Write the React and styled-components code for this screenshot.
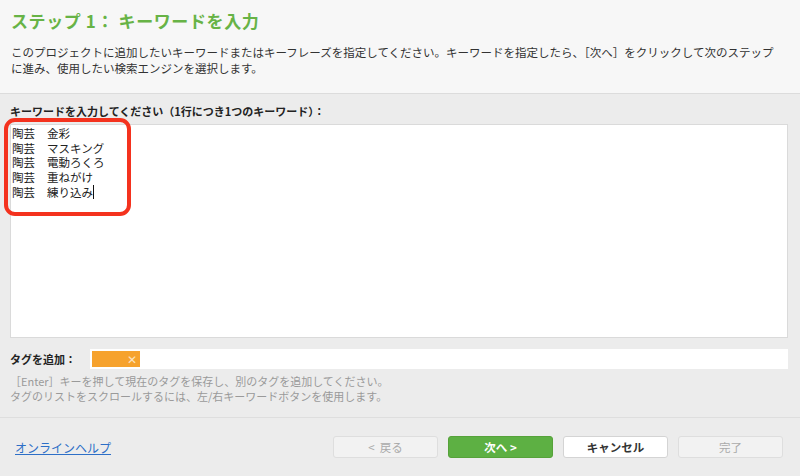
import React from 'react';
import styled, { createGlobalStyle } from 'styled-components';

const GlobalStyle = createGlobalStyle`
  html, body {
    margin: 0;
    padding: 0;
    background: #ececec;
  }
  body {
    font-family: "Noto Sans CJK JP", "Noto Sans", sans-serif;
  }
`;

const Page = styled.div`
  width: 800px;
  height: 476px;
  display: flex;
  flex-direction: column;
  background: #ececec;
  overflow: hidden;
`;

const Header = styled.div`
  height: 94px;
  flex-shrink: 0;
  box-sizing: border-box;
  padding: 9px 10px 0 11px;
  background: #f7f7f7;
  border-bottom: 1px solid #dcdcdc;
`;

const Title = styled.h1`
  margin: 0;
  font-size: 17px;
  font-weight: 700;
  color: #67b346;
  line-height: 24px;
  letter-spacing: 0.6px;
`;

const Description = styled.p`
  margin: 11px 0 0;
  font-size: 11.5px;
  line-height: 16px;
  color: #333;
`;

const Body = styled.div`
  flex: 1;
  display: flex;
  flex-direction: column;
  padding: 9px 12px 0 10px;
`;

const FieldLabel = styled.div`
  font-size: 11px;
  font-weight: 700;
  color: #222;
  line-height: 16px;
  margin-bottom: 5px;
`;

const AreaWrap = styled.div`
  position: relative;
`;

const KeywordArea = styled.div`
  height: 214px;
  box-sizing: border-box;
  background: #fff;
  border: 1px solid #dadada;
  padding: 1px 1px;
  font-size: 11.5px;
  line-height: 14.7px;
  color: #222;
`;

const Line = styled.div`
  display: flex;
  gap: 12px;
  white-space: nowrap;
`;

const Caret = styled.span`
  display: inline-block;
  width: 1px;
  height: 14px;
  background: #111;
  vertical-align: -2px;
`;

const Highlight = styled.div`
  position: absolute;
  left: -6px;
  top: -6px;
  width: 127px;
  height: 98px;
  box-sizing: border-box;
  border: 4px solid #f4321e;
  border-radius: 11px;
  pointer-events: none;
`;

const TagRow = styled.div`
  display: flex;
  align-items: center;
  margin-top: 11px;
`;

const TagLabel = styled.div`
  width: 80px;
  font-size: 11px;
  font-weight: 700;
  color: #222;
`;

const TagInput = styled.div`
  flex: 1;
  height: 20px;
  box-sizing: border-box;
  background: #fff;
  padding: 2px 2px;
  display: flex;
  align-items: center;
`;

const Tag = styled.div`
  width: 48px;
  height: 16px;
  background: #f6a22d;
  color: #fce3c0;
  font-size: 12px;
  display: flex;
  align-items: center;
  justify-content: flex-end;
  padding-right: 3px;
  box-sizing: border-box;
  line-height: 1;
`;

const Hint = styled.p`
  margin: 5px 0 0;
  font-size: 11px;
  line-height: 15px;
  color: #9a9a9a;
`;

const Footer = styled.div`
  height: 59px;
  flex-shrink: 0;
  box-sizing: border-box;
  border-top: 1px solid #dedede;
  display: flex;
  align-items: center;
  padding: 0 17px 0 15px;
`;

const HelpLink = styled.a`
  font-size: 12px;
  color: #2d6fc7;
  text-decoration: underline;
  margin-right: auto;
  cursor: pointer;
`;

const Buttons = styled.div`
  display: flex;
  gap: 10px;
`;

const Button = styled.button`
  width: 105px;
  height: 22px;
  border-radius: 3px;
  font-family: inherit;
  font-size: 11.5px;
  font-weight: ${p => (p.$primary || p.$normal ? 700 : 400)};
  border: 1px solid ${p => (p.$primary ? '#56a23a' : p.$normal ? '#d4d4d4' : '#dedede')};
  background: ${p => (p.$primary ? '#5db043' : p.$normal ? '#fff' : '#f2f2f2')};
  color: ${p => (p.$primary ? '#fff' : p.$normal ? '#333' : '#aaa')};
  padding: 0;
`;

const keywords = ['金彩', 'マスキング', '電動ろくろ', '重ねがけ', '練り込み'];

export default function App() {
  return (
    <Page>
      <GlobalStyle />
      <Header>
        <Title>ステップ 1： キーワードを入力</Title>
        <Description>
          このプロジェクトに追加したいキーワードまたはキーフレーズを指定してください。キーワードを指定したら、［次へ］をクリックして次のステップ
          <br />
          に進み、使用したい検索エンジンを選択します。
        </Description>
      </Header>
      <Body>
        <FieldLabel>キーワードを入力してください（1行につき1つのキーワード）：</FieldLabel>
        <AreaWrap>
          <KeywordArea>
            {keywords.map((k, i) => (
              <Line key={k}>
                <span>陶芸</span>
                <span>
                  {k}
                  {i === keywords.length - 1 && <Caret />}
                </span>
              </Line>
            ))}
          </KeywordArea>
          <Highlight />
        </AreaWrap>
        <TagRow>
          <TagLabel>タグを追加：</TagLabel>
          <TagInput>
            <Tag>✕</Tag>
          </TagInput>
        </TagRow>
        <Hint>
          ［Enter］キーを押して現在のタグを保存し、別のタグを追加してください。
          <br />
          タグのリストをスクロールするには、左/右キーワードボタンを使用します。
        </Hint>
      </Body>
      <Footer>
        <HelpLink>オンラインヘルプ</HelpLink>
        <Buttons>
          <Button>&lt;&nbsp;&nbsp;戻る</Button>
          <Button $primary>次へ &gt;</Button>
          <Button $normal>キャンセル</Button>
          <Button>完了</Button>
        </Buttons>
      </Footer>
    </Page>
  );
}
